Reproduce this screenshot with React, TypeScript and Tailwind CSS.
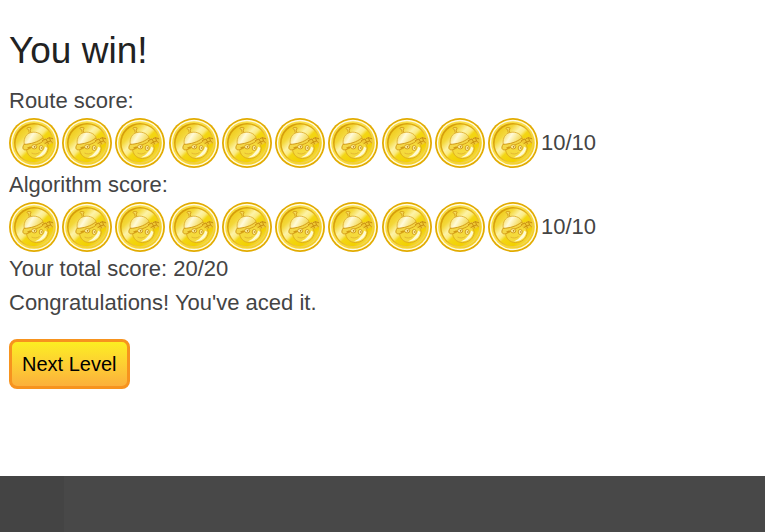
import React from "react";

function CoinArt() {
  return (
    <svg viewBox="0 0 50 50" className="block size-[50px]" aria-hidden="true">
      <circle cx="25" cy="25" r="25" fill="#e2ab00" />
      <circle cx="25" cy="25" r="23.2" fill="#fffbe0" />
      <circle cx="25" cy="25" r="21.800" fill="url(#coin-rim)" />
      <circle cx="25" cy="25" r="20" fill="url(#coin-edge)" />
      <circle cx="25.400" cy="25.400" r="18.800" fill="url(#coin-face)" />
      <path d="M17.500 31c.3 5 4 9.500 10 9.500 6.300 0 11.300-4 11.800-10.500L37 24l-5-1-14 5z" fill="#f5da3c" stroke="#dba820" strokeWidth="0.900" />
      <path d="M26 39.500c7-.2 11.500-3.800 12.300-9.500l-2-1.500c-.8 2-1.500 4-3.300 5.500-2 2.500-4 4-7 5.500z" fill="#fffad2" />
      <path d="M15.300 26.500c-.8-4.500.7-9.300 4.700-11.300 5-2.400 12.500-.6 14.200 4.800-1.500 3-5.500 4.500-9.200 5.500-3.500.8-6.500 1.200-9.700 1z" fill="url(#coin-cap)" stroke="#dca928" strokeWidth="0.800" strokeLinejoin="round" />
      <path d="M15 26.300c6.500 0 14-2.300 18.800-6.300l1 2.300c-2 2.500-4.500 3.200-7 4.200-3 1.200-6 4-10 5.200-3.300.9-5.300-1.200-2.800-5.400z" fill="#f4d748" stroke="#d09612" strokeWidth="0.900" strokeLinejoin="round" />
      <path d="M20.300 15l-.7-3.300-1.700-1 .6-1.200 3.300.2.200 1.400-1 .7.800 3" fill="#f7e060" stroke="#d59e18" strokeWidth="0.900" strokeLinejoin="round" />
      <path d="M34 22c1-1.800 2.800-2.300 4.300-1.600.8-1.800 3-2.200 4-.7 1.700-.3 2.700 1.600 1.600 2.800 1 1.400-.2 3-1.800 2.700-.8 1.800-3 2-4 .5-1.700.7-3.600.2-4.100-1.700z" fill="#efc934" />
      <path d="M33.500 22.500l3.500-1.500 1.500 3 3-1-1-3.300 3.200 1M36 25.500l2.500-1.500 1 2M41.500 23l1.800 1.500M38.300 20.500l2.200-.8" fill="none" stroke="#ca900e" strokeWidth="1" strokeLinecap="round" />
      <path d="M18 29.800l3.300-1.600 1.200 1.300-3 1.500z" fill="#d29b12" />
      <ellipse cx="25.200" cy="28.800" rx="2.600" ry="2.100" fill="#fff3a6" stroke="#cf9715" strokeWidth="0.900" />
      <ellipse cx="32.200" cy="30" rx="2" ry="2.500" fill="#fff3a6" stroke="#cf9715" strokeWidth="0.900" />
      <circle cx="25.600" cy="28.800" r="0.900" fill="#bd8510" />
      <circle cx="32.500" cy="30" r="0.800" fill="#bd8510" />
      <path d="M22.500 35c3 1.500 5.500 1.200 8-.5" fill="none" stroke="#dba92c" strokeWidth="0.700" />
    </svg>
  );
}

function CoinGradients() {
  return (
    <svg className="absolute size-0" aria-hidden="true">
      <defs>
        <linearGradient id="coin-rim" x1="0" y1="0" x2="1" y2="1">
          <stop offset="0" stopColor="#f7d93a" />
          <stop offset="0.450" stopColor="#fbe04a" />
          <stop offset="1" stopColor="#f0c714" />
        </linearGradient>
        <linearGradient id="coin-edge" x1="0" y1="0" x2="1" y2="1">
          <stop offset="0" stopColor="#cf9400" />
          <stop offset="0.500" stopColor="#e3b21c" />
          <stop offset="1" stopColor="#fbe67a" />
        </linearGradient>
        <linearGradient id="coin-face" x1="0.100" y1="0.100" x2="0.900" y2="0.900">
          <stop offset="0" stopColor="#efc918" />
          <stop offset="0.200" stopColor="#f4d83a" />
          <stop offset="0.360" stopColor="#fdf3a8" />
          <stop offset="0.460" stopColor="#fbeb80" />
          <stop offset="0.540" stopColor="#f3d614" />
          <stop offset="0.800" stopColor="#f2d000" />
          <stop offset="1" stopColor="#f3d95a" />
        </linearGradient>
        <linearGradient id="coin-cap" x1="0" y1="0.300" x2="1" y2="0.700">
          <stop offset="0" stopColor="#f6df68" />
          <stop offset="0.350" stopColor="#fffada" />
          <stop offset="0.700" stopColor="#f8e57e" />
          <stop offset="1" stopColor="#efce3c" />
        </linearGradient>
      </defs>
    </svg>
  );
}

function Score({ label, value, max }: { label: string; value: number; max: number }) {
  return (
    <section>
      <p>{label}</p>
      <div className="flex items-center gap-[3px]">
        <div className="flex w-[529px] shrink-0 justify-between">
          {Array.from({ length: value }, (_, i) => (
            <CoinArt key={i} />
          ))}
        </div>
        <span>
          {value}/{max}
        </span>
      </div>
    </section>
  );
}

export default function App() {
  return (
    <div className="flex min-h-screen flex-col bg-white font-['Liberation_Sans',Arial,sans-serif] text-[22px] leading-[34px] text-[#444]">
      <CoinGradients />
      <main className="grow px-[9px] pt-[25px]">
        <h1 className="mb-[7px] text-[37px] leading-[52px] text-[#222]">You win!</h1>
        <Score label="Route score:" value={10} max={10} />
        <Score label="Algorithm score:" value={10} max={10} />
        <p>Your total score: 20/20</p>
        <p>Congratulations! You've aced it.</p>
        <button
          type="button"
          className="mt-[19px] h-[50px] rounded-lg border-3 border-[#f7931e] bg-linear-to-b from-[#fcee21] to-[#fbb03b] px-2.5 text-xl text-black"
        >
          Next Level
        </button>
      </main>
      <footer className="flex h-14 bg-[#484848]">
        <div className="w-16 bg-[#444]" />
      </footer>
    </div>
  );
}
